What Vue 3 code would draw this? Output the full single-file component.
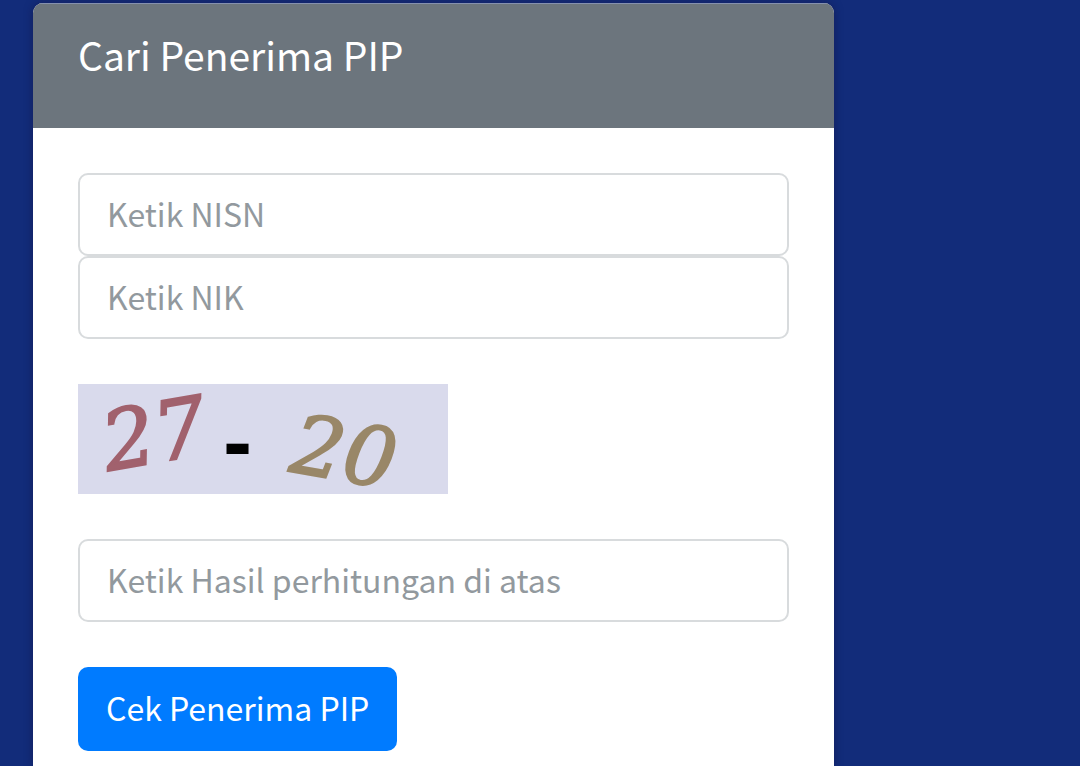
<script setup>
import { ref } from 'vue'

const nisn = ref('')
const nik = ref('')
const answer = ref('')
</script>

<template>
  <main class="page">
    <section class="card">
      <header class="card-header">
        <h1>Cari Penerima PIP</h1>
      </header>
      <form class="card-body" @submit.prevent>
        <div class="group">
          <input v-model="nisn" type="text" placeholder="Ketik NISN" aria-label="Ketik NISN" />
          <input v-model="nik" type="text" placeholder="Ketik NIK" aria-label="Ketik NIK" />
        </div>
        <svg class="captcha" viewBox="0 0 370 110" role="img" aria-label="27 - 20">
          <rect width="370" height="110" fill="#d9daec" />
          <text class="digits first" transform="translate(30 87) rotate(-10)">27</text>
          <text class="minus" x="146" y="88">-</text>
          <text class="digits second" transform="translate(210 87) rotate(10)">20</text>
        </svg>
        <input v-model="answer" type="text" placeholder="Ketik Hasil perhitungan di atas" aria-label="Ketik Hasil perhitungan di atas" />
        <button type="submit">Cek Penerima PIP</button>
      </form>
    </section>
  </main>
</template>

<style>
body {
  margin: 0;
  background: #122c7a;
}
</style>

<style scoped>
.page {
  box-sizing: border-box;
  min-height: 100vh;
  padding: 3px 22.8% 0 33px;
  display: flex;
  font-family: "Noto Sans CJK SC", "Noto Sans", sans-serif;
}
.card {
  flex: 1;
  min-width: 0;
  background: #fff;
  border-radius: 10px 10px 0 0;
  overflow: hidden;
  box-shadow: 0 0 8px rgba(20, 20, 70, 0.6);
}
.card-header {
  background: #6c757d;
  padding: 26px 45px 50px;
  border-top: 1px solid #8490ae;
}
h1 {
  margin: 0;
  font-size: 39px;
  line-height: 48px;
  font-weight: 400;
  color: #fff;
}
.card-body {
  display: flex;
  flex-direction: column;
  align-items: flex-start;
  gap: 45px;
  padding: 45px 45px 15px;
}
.group {
  width: 100%;
  display: flex;
  flex-direction: column;
}
input {
  box-sizing: border-box;
  width: 100%;
  height: 83px;
  padding: 0 27px 4px;
  border: 2px solid #d8dbdd;
  border-radius: 10px;
  background: #fff;
  font-family: inherit;
  font-size: 32px;
  color: #495057;
}
input::placeholder {
  color: #92999e;
  opacity: 1;
}
.captcha {
  display: block;
  width: 370px;
  height: 110px;
  overflow: visible;
}
.digits {
  font-family: "DejaVu Serif", serif;
  font-style: italic;
  font-size: 82px;
  stroke-width: 2px;
}
.first {
  fill: #a1616d;
  stroke: #a1616d;
}
.second {
  fill: #998768;
  stroke: #998768;
}
.minus {
  font-family: "Open Sans", "Noto Sans", sans-serif;
  font-weight: 700;
  font-size: 84px;
  fill: #000;
}
button {
  height: 84px;
  padding: 0 28px 4px;
  border: 0;
  border-radius: 10px;
  background: #007bff;
  color: #fff;
  font-family: inherit;
  font-size: 32px;
  cursor: pointer;
}
</style>
